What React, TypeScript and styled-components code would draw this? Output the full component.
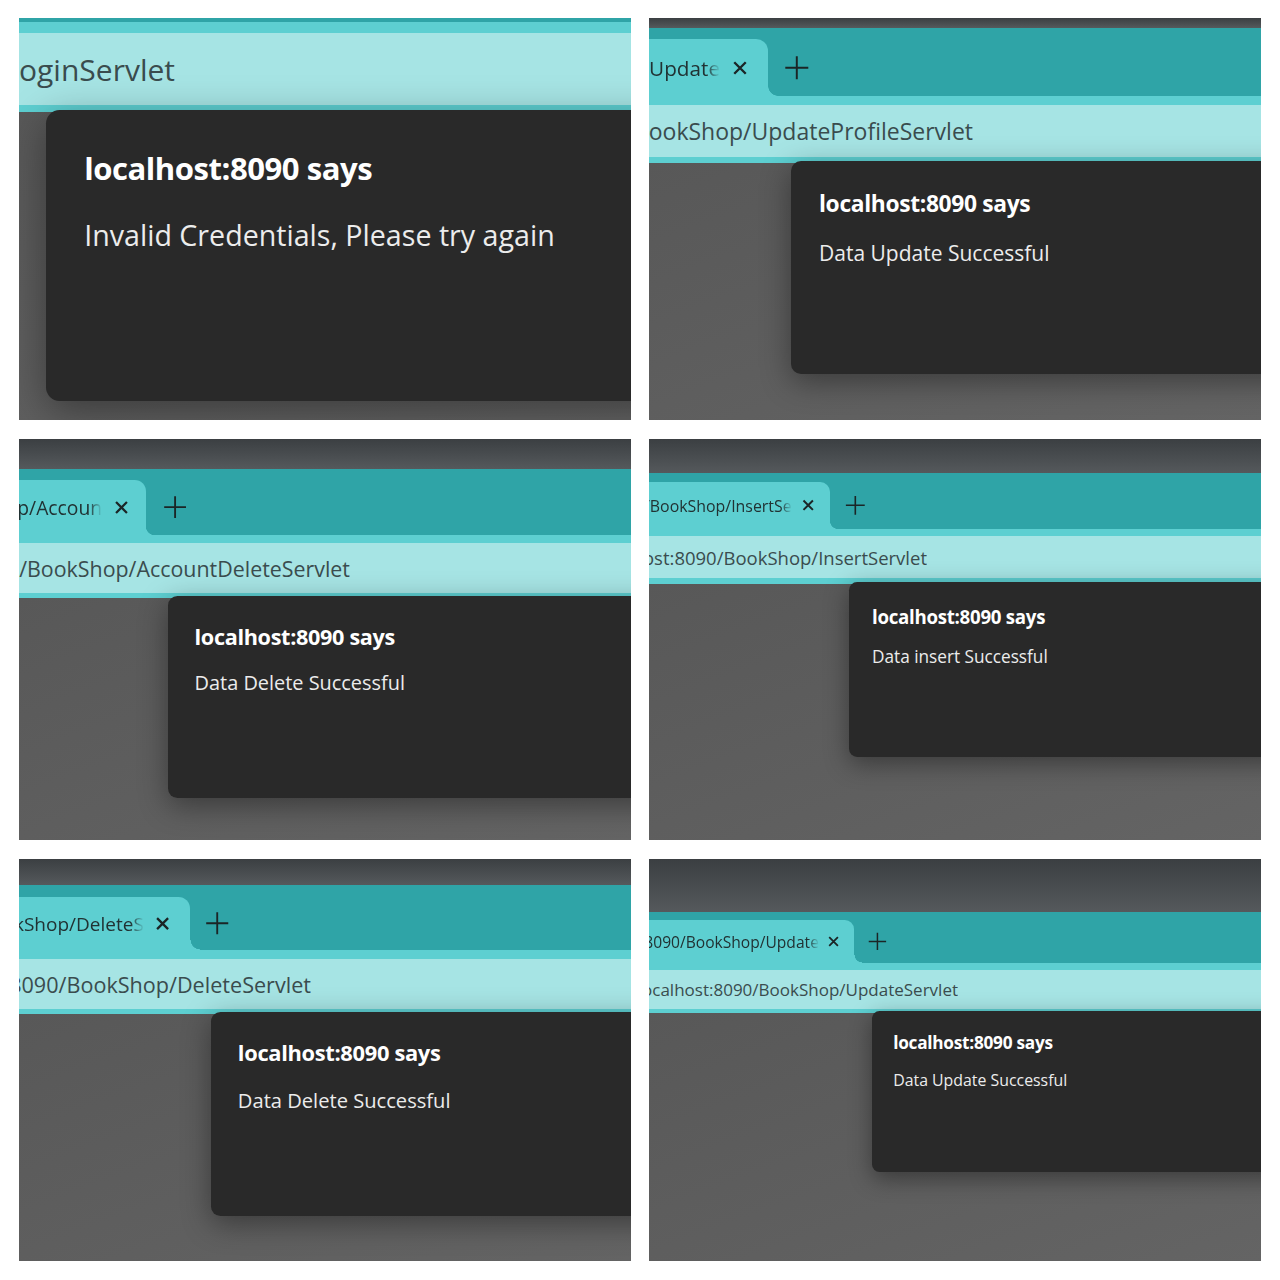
import React from "react";
import styled, { createGlobalStyle } from "styled-components";

const TEAL_DARK = "#2fa4a7";
const TEAL_MID = "#5dcfd1";
const TEAL_LIGHT = "#a6e4e4";

const GlobalStyle = createGlobalStyle`
  html, body { margin: 0; padding: 0; background: #ffffff; }
  body { font-family: "Open Sans", "Noto Sans", "DejaVu Sans", sans-serif; }
  #root { width: 1280px; height: 1280px; }
`;

const Collage = styled.div`
  box-sizing: border-box;
  width: 1280px;
  height: 1280px;
  padding: 18px 0 0 19px;
  background: #ffffff;
  display: grid;
  grid-template-columns: 612px 612px;
  grid-template-rows: 402px 401px 402px;
  column-gap: 18px;
  row-gap: 19px;
`;

const Shot = styled.section`
  display: flex;
  flex-direction: column;
  overflow: hidden;
  background: #606060;
  min-width: 0;
`;

const TitleBar = styled.div<{ $h: number }>`
  flex: none;
  height: ${(p) => p.$h}px;
  background: linear-gradient(180deg, #3b3f42 0%, #55595c 100%);
`;

const TabStrip = styled.div<{ $h: number }>`
  flex: none;
  height: ${(p) => p.$h}px;
  background: ${TEAL_DARK};
  display: flex;
  align-items: flex-end;
`;

const Tab = styled.div<{ $w: number; $h: number; $s: number; $pr: number }>`
  position: relative;
  flex: none;
  box-sizing: border-box;
  width: ${(p) => p.$w}px;
  height: ${(p) => p.$h}px;
  padding-right: ${(p) => p.$pr}px;
  background: ${TEAL_MID};
  border-top-right-radius: ${(p) => 12 * p.$s}px;
  display: flex;
  align-items: center;
  &::after {
    content: "";
    position: absolute;
    bottom: 0;
    right: ${(p) => -10 * p.$s}px;
    width: ${(p) => 10 * p.$s}px;
    height: ${(p) => 10 * p.$s}px;
    background: radial-gradient(
      circle at 100% 0,
      transparent ${(p) => 10 * p.$s - 0.5}px,
      ${TEAL_MID} ${(p) => 10 * p.$s}px
    );
  }
`;

const TabTitle = styled.div<{ $size: number; $s: number }>`
  flex: 1 1 auto;
  min-width: 0;
  overflow: hidden;
  display: flex;
  justify-content: flex-end;
  white-space: nowrap;
  font-size: ${(p) => p.$size}px;
  color: #213233;
  -webkit-mask-image: linear-gradient(90deg, #000 calc(100% - ${(p) => 14 * p.$s}px), transparent 100%);
  mask-image: linear-gradient(90deg, #000 calc(100% - ${(p) => 14 * p.$s}px), transparent 100%);
`;

const CloseButton = styled.div<{ $s: number }>`
  flex: none;
  width: ${(p) => 24 * p.$s}px;
  margin-left: ${(p) => 8 * p.$s}px;
  display: flex;
  align-items: center;
  justify-content: center;
  color: #1b2526;
`;

const NewTabButton = styled.div<{ $h: number; $ml: number; $w: number }>`
  flex: none;
  height: ${(p) => p.$h}px;
  width: ${(p) => p.$w}px;
  margin-left: ${(p) => p.$ml}px;
  display: flex;
  align-items: center;
  justify-content: center;
  color: #1b2526;
`;

const Toolbar = styled.div<{ $top: number; $bottom: number }>`
  flex: none;
  background: ${TEAL_MID};
  padding: ${(p) => p.$top}px 0 ${(p) => p.$bottom}px;
`;

const AddressBar = styled.div<{ $h: number }>`
  height: ${(p) => p.$h}px;
  background: ${TEAL_LIGHT};
  display: flex;
  align-items: center;
`;

const UrlClip = styled.div<{ $w: number; $size: number }>`
  flex: none;
  width: ${(p) => p.$w}px;
  overflow: hidden;
  display: flex;
  justify-content: flex-end;
  white-space: nowrap;
  font-size: ${(p) => p.$size}px;
  color: #3a4c4e;
`;

const Content = styled.div<{ $x: number }>`
  flex: 1 1 auto;
  min-height: 0;
  display: flex;
  align-items: flex-start;
  padding-left: ${(p) => p.$x}px;
  background: linear-gradient(160deg, #585858 0%, #5f5f5f 60%, #646464 100%);
`;

const Dialog = styled.div<{ $s: number }>`
  flex: none;
  box-sizing: border-box;
  width: 900px;
  height: ${(p) => 213 * p.$s}px;
  margin-top: -2px;
  padding: ${(p) => 28 * p.$s}px 0 0 ${(p) => 28 * p.$s}px;
  border-radius: ${(p) => 10 * p.$s}px;
  background: #292929;
  box-shadow: 0 ${(p) => 8 * p.$s}px ${(p) => 30 * p.$s}px rgba(0, 0, 0, 0.38);
  display: flex;
  flex-direction: column;
`;

const DialogTitle = styled.h2<{ $s: number }>`
  margin: 0;
  font-size: ${(p) => 22.8 * p.$s}px;
  line-height: ${(p) => 30 * p.$s}px;
  font-weight: 700;
  color: #ffffff;
  letter-spacing: -0.015em;
  white-space: nowrap;
`;

const DialogMessage = styled.p<{ $s: number }>`
  margin: ${(p) => 20 * p.$s}px 0 0;
  font-size: ${(p) => 21 * p.$s}px;
  line-height: ${(p) => 28 * p.$s}px;
  color: #ececec;
  white-space: nowrap;
`;

const CloseIcon = ({ s }: { s: number }) => (
  <svg width={20 * s} height={20 * s} viewBox="0 0 16 16" fill="none">
    <path d="M3.4 3.4 L12.6 12.6 M12.6 3.4 L3.4 12.6" stroke="currentColor" strokeWidth={1.9} strokeLinecap="butt" />
  </svg>
);

const PlusIcon = ({ s }: { s: number }) => (
  <svg width={27.6 * s} height={27.6 * s} viewBox="0 0 24 24" fill="none">
    <path d="M12 2 V22 M2 12 H22" stroke="currentColor" strokeWidth={1.7} />
  </svg>
);

type ShotData = {
  s: number;
  font: number;
  dark: number;
  strip: number;
  tab?: { h: number; right: number; closeX: number; plusX: number; title: string; font: number };
  bandTop: number;
  addr: number;
  bandBottom: number;
  url: string;
  urlEnd: number;
  dialogX: number;
  message: string;
};

const shots: ShotData[] = [
  {
    s: 1.364, font: 30, dark: 0, strip: 4,
    bandTop: 11, addr: 72, bandBottom: 7,
    url: "localhost:8090/BookShop/LoginServlet", urlEnd: 156,
    dialogX: 27, message: "Invalid Credentials, Please try again",
  },
  {
    s: 1, font: 23, dark: 10, strip: 68,
    tab: { h: 57, right: 119, closeX: 91, plusX: 148, title: "localhost:8090/BookShop/Update", font: 20.7 },
    bandTop: 9, addr: 52, bandBottom: 6,
    url: "localhost:8090/BookShop/UpdateProfileServlet", urlEnd: 324,
    dialogX: 142, message: "Data Update Successful",
  },
  {
    s: 0.949, font: 21.4, dark: 30, strip: 66,
    tab: { h: 55, right: 127, closeX: 102, plusX: 156, title: "localhost:8090/BookShop/Accoun", font: 19.3 },
    bandTop: 8, addr: 50, bandBottom: 5,
    url: "localhost:8090/BookShop/AccountDeleteServlet", urlEnd: 331,
    dialogX: 149, message: "Data Delete Successful",
  },
  {
    s: 0.82, font: 18.5, dark: 34, strip: 56,
    tab: { h: 47, right: 181, closeX: 159, plusX: 206, title: "localhost:8090/BookShop/InsertSe", font: 15.9 },
    bandTop: 7, addr: 42, bandBottom: 6,
    url: "localhost:8090/BookShop/InsertServlet", urlEnd: 278,
    dialogX: 200, message: "Data insert Successful",
  },
  {
    s: 0.959, font: 21.6, dark: 26, strip: 65,
    tab: { h: 53, right: 171, closeX: 144, plusX: 198, title: "localhost:8090/BookShop/DeleteS", font: 19 },
    bandTop: 9, addr: 50, bandBottom: 5,
    url: "localhost:8090/BookShop/DeleteServlet", urlEnd: 292,
    dialogX: 192, message: "Data Delete Successful",
  },
  {
    s: 0.756, font: 17, dark: 53, strip: 51,
    tab: { h: 43, right: 205, closeX: 185, plusX: 228, title: "localhost:8090/BookShop/Update", font: 15.6 },
    bandTop: 7, addr: 39, bandBottom: 4,
    url: "localhost:8090/BookShop/UpdateServlet", urlEnd: 309,
    dialogX: 223, message: "Data Update Successful",
  },
];

const BrowserShot = ({ d }: { d: ShotData }) => {
  const t = d.tab;
  const plusW = 30 * d.s;
  return (
    <Shot>
      {d.dark > 0 && <TitleBar $h={d.dark} />}
      <TabStrip $h={d.strip}>
        {t && (
          <>
            <Tab $w={t.right} $h={t.h} $s={d.s} $pr={t.right - t.closeX - 12 * d.s}>
              <TabTitle $size={t.font} $s={d.s}>
                <span>{t.title}</span>
              </TabTitle>
              <CloseButton $s={d.s}>
                <CloseIcon s={d.s} />
              </CloseButton>
            </Tab>
            <NewTabButton $h={t.h} $w={plusW} $ml={t.plusX - t.right - plusW / 2}>
              <PlusIcon s={d.s} />
            </NewTabButton>
          </>
        )}
      </TabStrip>
      <Toolbar $top={d.bandTop} $bottom={d.bandBottom}>
        <AddressBar $h={d.addr}>
          <UrlClip $w={d.urlEnd} $size={d.font}>
            <span>{d.url}</span>
          </UrlClip>
        </AddressBar>
      </Toolbar>
      <Content $x={d.dialogX}>
        <Dialog $s={d.s}>
          <DialogTitle $s={d.s}>localhost:8090 says</DialogTitle>
          <DialogMessage $s={d.s}>{d.message}</DialogMessage>
        </Dialog>
      </Content>
    </Shot>
  );
};

export default function App() {
  return (
    <>
      <GlobalStyle />
      <Collage>
        {shots.map((d, i) => (
          <BrowserShot key={i} d={d} />
        ))}
      </Collage>
    </>
  );
}
